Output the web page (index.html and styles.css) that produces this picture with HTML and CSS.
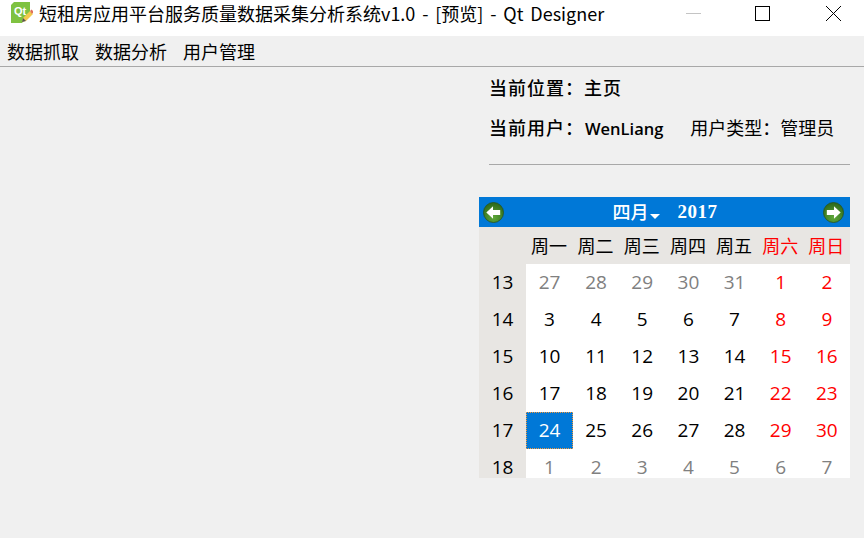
FILE: index.html
```html
<!DOCTYPE html>
<html lang="zh">
<head>
<meta charset="utf-8">
<title>Qt Designer</title>
<link rel="stylesheet" href="styles.css">
</head>
<body>
<div class="titlebar">
  <svg class="appicon" width="22" height="22" viewBox="0 0 22 22">
    <path d="M3 0H19V11L11 21H0V3Z" fill="#7fc241"/>
    <text x="3" y="13" class="qt">Qt</text>
    <path d="M11 20l1-4 7-7 3 3-7 7z" fill="#f2c94c"/>
    <path d="M19 9l1.5-1.5 2 2L21 12z" fill="#e0705a"/>
    <path d="M11 20l1-4 3 3z" fill="#555"/>
  </svg>
  <span class="title">短租房应用平台服务质量数据采集分析系统<span class="titlelatin">v1.0 - [预览] - Qt Designer</span></span>
  <div class="winbtns">
    <svg class="minbtn" width="16" height="16" viewBox="0 0 16 16"><path d="M1 8.5H16" stroke="#c4c4c4" fill="none"/></svg>
    <svg width="16" height="16" viewBox="0 0 16 16"><rect x="1.5" y="1.5" width="14" height="14" stroke="#000" fill="none"/></svg>
    <svg width="16" height="16" viewBox="0 0 16 16"><path d="M1 1L16 16M16 1L1 16" stroke="#000" fill="none"/></svg>
  </div>
</div>
<nav class="menubar">
  <span>数据抓取</span><span>数据分析</span><span>用户管理</span>
</nav>
<main class="content">
  <section class="panel">
    <div class="info">
      <p class="loc"><b>当前位置：主页</b></p>
      <p class="user"><b>当前用户：<span class="latin">WenLiang</span></b><span class="type">用户类型：管理员</span></p>
      <hr class="rule">
    </div>
    <div class="calendar">
      <div class="calhead">
        <svg class="nav" width="21" height="21" viewBox="0 0 22 22">
          <defs>
            <radialGradient id="g" cx="50%" cy="75%" r="70%"><stop offset="0" stop-color="#5fa83a"/><stop offset="1" stop-color="#2f6b1c"/></radialGradient>
          </defs>
          <circle cx="11" cy="11" r="10.5" fill="url(#g)" stroke="#26531a" stroke-width="0.8"/>
          <path d="M3.5 11L10.5 4.5V8.5H18V13.5H10.5V17.5Z" fill="#fff"/>
        </svg>
        <div class="month"><span class="mname">四月</span><i class="caret"></i><span class="year">2017</span></div>
        <svg class="nav" width="21" height="21" viewBox="0 0 22 22">
          <circle cx="11" cy="11" r="10.5" fill="url(#g)" stroke="#26531a" stroke-width="0.8"/>
          <path d="M18.5 11L11.5 4.5V8.5H4V13.5H11.5V17.5Z" fill="#fff"/>
        </svg>
      </div>
      <div class="grid">
        <div class="wk hd"></div><div class="hd">周一</div><div class="hd">周二</div><div class="hd">周三</div><div class="hd">周四</div><div class="hd">周五</div><div class="hd red">周六</div><div class="hd red">周日</div>
        <div class="wk">13</div><div class="d mute">27</div><div class="d mute">28</div><div class="d mute">29</div><div class="d mute">30</div><div class="d mute">31</div><div class="d red">1</div><div class="d red">2</div>
        <div class="wk">14</div><div class="d">3</div><div class="d">4</div><div class="d">5</div><div class="d">6</div><div class="d">7</div><div class="d red">8</div><div class="d red">9</div>
        <div class="wk">15</div><div class="d">10</div><div class="d">11</div><div class="d">12</div><div class="d">13</div><div class="d">14</div><div class="d red">15</div><div class="d red">16</div>
        <div class="wk">16</div><div class="d">17</div><div class="d">18</div><div class="d">19</div><div class="d">20</div><div class="d">21</div><div class="d red">22</div><div class="d red">23</div>
        <div class="wk">17</div><div class="d sel">24</div><div class="d">25</div><div class="d">26</div><div class="d">27</div><div class="d">28</div><div class="d red">29</div><div class="d red">30</div>
        <div class="wk">18</div><div class="d mute">1</div><div class="d mute">2</div><div class="d mute">3</div><div class="d mute">4</div><div class="d mute">5</div><div class="d mute">6</div><div class="d mute">7</div>
      </div>
    </div>
  </section>
</main>
</body>
</html>
```

FILE: styles.css
```css
* { box-sizing: border-box; }
html, body { margin: 0; padding: 0; }
body {
  width: 864px;
  height: 538px;
  overflow: hidden;
  background: #f0f0f0;
  font-family: "Noto Sans CJK SC", "Open Sans", sans-serif;
  color: #000;
  display: flex;
  flex-direction: column;
}
.titlebar {
  height: 36px;
  background: #fff;
  display: flex;
  align-items: center;
  padding: 0 0 10px 11px;
}
.appicon { flex: none; margin-right: 6px; }
.qt { font: bold 11px "Liberation Sans", sans-serif; fill: #fff; }
.title { font-size: 18px; white-space: nowrap; flex: 1; }
.titlelatin { word-spacing: 2.8px; }
.winbtns {
  display: flex;
  gap: 55px;
  padding-right: 23px;
}
.minbtn { margin-right: -2px; }
.menubar {
  height: 31px;
  border-bottom: 1px solid #a8a8a8;
  display: flex;
  gap: 16px;
  padding-left: 7px;
  align-items: center;
  font-size: 18px;
}
.content { flex: 1; display: flex; justify-content: flex-end; padding-right: 14px; }
.panel { width: 371px; display: flex; flex-direction: column; }
.info { padding: 0 0 0 10px; height: 130px; }
.info p { margin: 0; white-space: nowrap; height: 24px; line-height: 24px; }
.info b { font-weight: 500; }
.loc { font-size: 18px; letter-spacing: 1px; margin-top: 8px !important; }
.user { font-size: 18px; margin-top: 16px !important; }
.user b { letter-spacing: 1px; }
.latin { font-family: "Open Sans", sans-serif; font-size: 16.5px; font-weight: 600; letter-spacing: 0; margin-left: 1px; }
.type { margin-left: 27px; font-size: 18px; }
.rule { border: 0; height: 1px; background: #a8a8a8; margin: 25px 0 0; }
.calhead {
  height: 30px;
  background: #0078d7;
  display: flex;
  align-items: center;
  justify-content: space-between;
  padding: 0 6px 0 4px;
  color: #fff;
}
.nav { flex: none; }
.month {
  display: flex;
  align-items: center;
  font-family: "Noto Sans CJK SC", serif;
  font-size: 18px;
  margin-left: 3px;
}
.mname { font-weight: 500; line-height: 1; margin-top: -2px; }
.caret {
  width: 0;
  height: 0;
  border: 5px solid transparent;
  border-top: 5px solid #fff;
  border-bottom: 0;
  margin: 9px 0 0 1px;
}
.year { font: bold 19px "Liberation Serif", serif; letter-spacing: 0.5px; margin-left: 18px; }
.grid {
  display: grid;
  grid-template-columns: 47px 47px repeat(6, 46.17px);
  grid-template-rows: repeat(7, 37px);
  height: 251px;
  overflow: hidden;
  background: #fff;
  font-family: "Open Sans", sans-serif;
  font-size: 19px;
}
.grid > div {
  display: flex;
  align-items: center;
  justify-content: center;
  padding-bottom: 2px;
}
.hd {
  background: #e8e6e3;
  font-family: "Noto Sans CJK SC", sans-serif;
  font-size: 18px;
  padding-right: 1px;
}
.wk { background: #e8e6e3; }
.mute { color: #808080; }
.red { color: #ff0000; }
.sel {
  color: #fff;
  background:
    repeating-linear-gradient(90deg, #f59a3c 0 1px, transparent 1px 2px) top / 100% 1px no-repeat,
    repeating-linear-gradient(90deg, #f59a3c 0 1px, transparent 1px 2px) bottom / 100% 1px no-repeat,
    repeating-linear-gradient(0deg, #f59a3c 0 1px, transparent 1px 2px) left / 1px 100% no-repeat,
    repeating-linear-gradient(0deg, #f59a3c 0 1px, transparent 1px 2px) right / 1px 100% no-repeat,
    #0078d7;
}
```
